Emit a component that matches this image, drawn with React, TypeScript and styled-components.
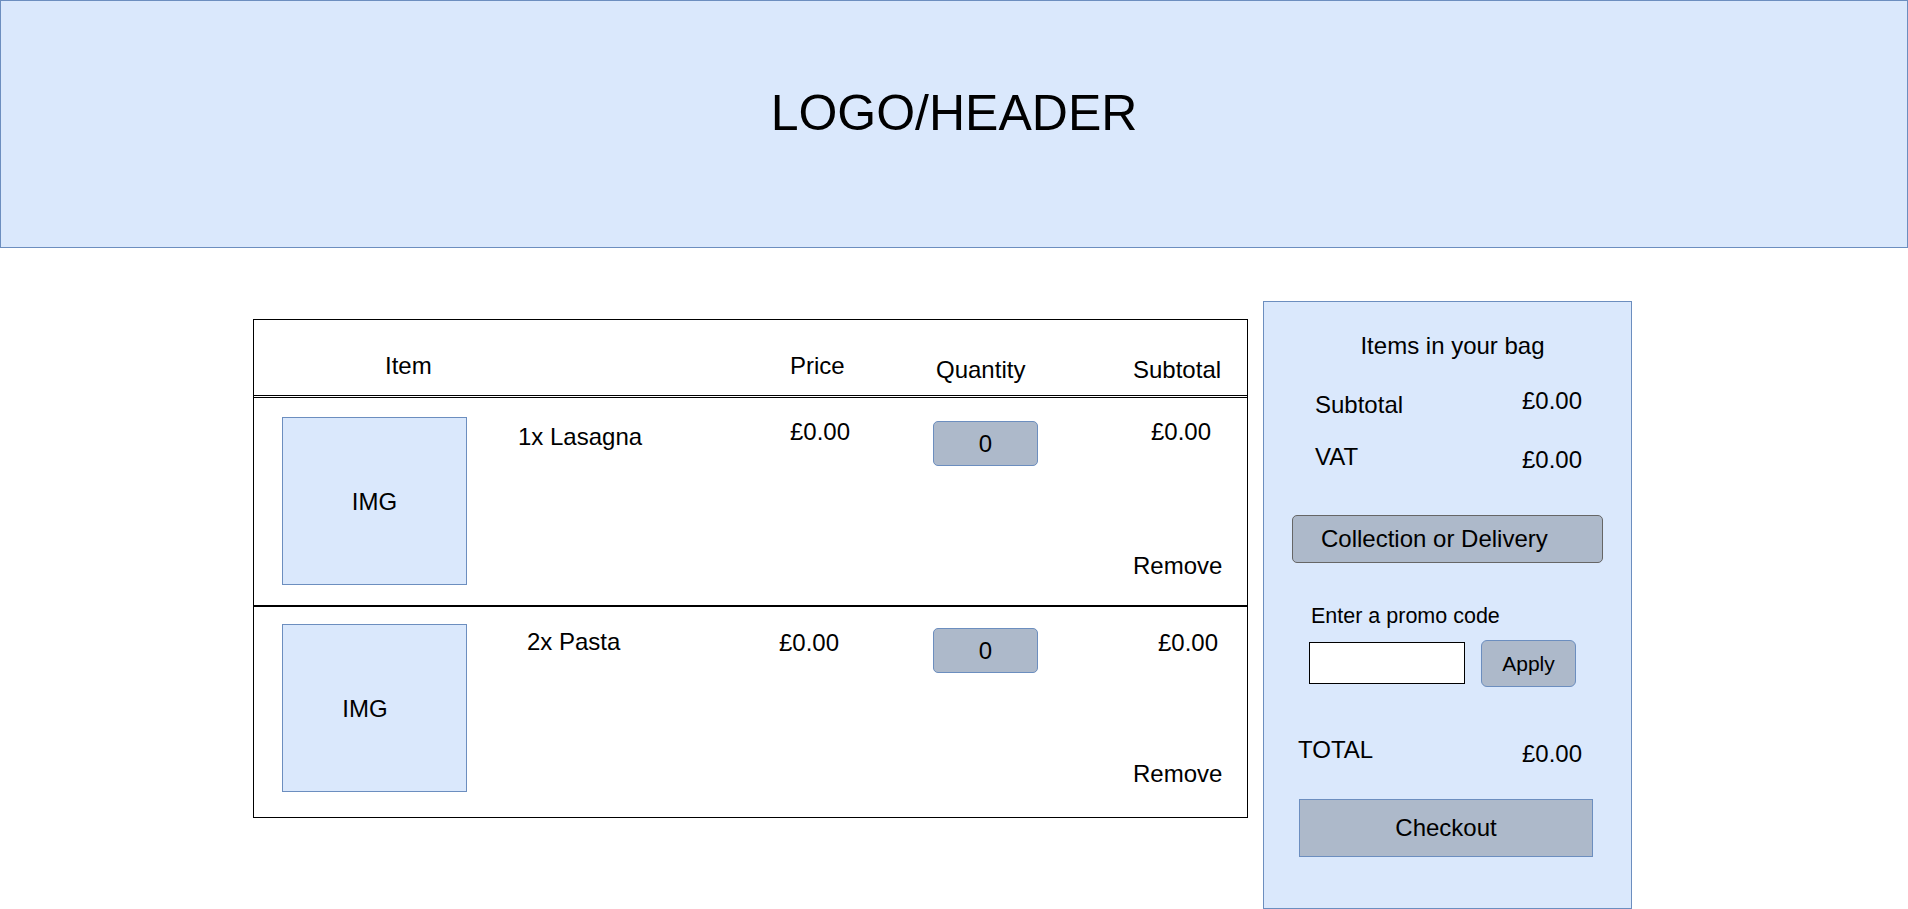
import React from "react";
import styled, { createGlobalStyle } from "styled-components";

const GlobalStyle = createGlobalStyle`
  html, body {
    margin: 0;
    padding: 0;
    background: #ffffff;
  }
  body {
    font-family: "Liberation Sans", Arial, Helvetica, sans-serif;
    color: #000000;
  }
  * {
    box-sizing: border-box;
  }
`;

const Page = styled.div`
  width: 1908px;
  min-height: 909px;
`;

const Header = styled.header`
  height: 248px;
  border: 1px solid #6c8ebf;
  background: #dae8fc;
  padding-top: 83px;
  text-align: center;
  font-size: 50px;
  line-height: 58px;
`;

const Main = styled.main`
  display: flex;
  align-items: flex-start;
  padding-left: 253px;
  gap: 15px;
`;

const Table = styled.section`
  width: 995px;
  margin-top: 71px;
  border: 1px solid #000000;
  background: #ffffff;
`;

const grid = `
  display: grid;
  grid-template-columns: 264px 261px 154px 105px 95px 1fr;
  align-items: start;
`;

const HeaderRow = styled.div`
  ${grid}
  height: 78px;
  border-bottom: 3px double #000000;
`;

const ItemRow = styled.div<{ $h: number; $divider?: boolean }>`
  ${grid}
  height: ${(p) => p.$h + (p.$divider ? 2 : 0)}px;
  border-bottom: ${(p) => (p.$divider ? "2px solid #000000" : "none")};
`;

const Cell = styled.div<{ $x?: number; $y?: number }>`
  margin-left: ${(p) => p.$x ?? 0}px;
  margin-top: ${(p) => p.$y ?? 0}px;
  font-size: 24px;
  line-height: 28px;
  white-space: nowrap;
`;

const ImgBox = styled.div<{ $y: number; $shift?: number }>`
  margin-left: 28px;
  margin-top: ${(p) => p.$y}px;
  width: 185px;
  height: 168px;
  border: 1px solid #6c8ebf;
  background: #dae8fc;
  display: flex;
  align-items: center;
  justify-content: center;
  padding-top: 2px;
  padding-right: ${(p) => p.$shift ?? 0}px;
  font-size: 24px;
  line-height: 28px;
`;

const QtyBox = styled.div<{ $y: number }>`
  margin-top: ${(p) => p.$y}px;
  width: 105px;
  height: 45px;
  border: 1px solid #6c8ebf;
  border-radius: 5px;
  background: #adb9ca;
  display: flex;
  align-items: center;
  justify-content: center;
  font-size: 24px;
  line-height: 28px;
`;

const SubtotalCol = styled.div<{ $y: number; $gap: number; $x: number }>`
  margin-top: ${(p) => p.$y}px;
  display: flex;
  flex-direction: column;
  align-items: flex-start;
  font-size: 24px;
  line-height: 28px;
  & > span:first-child {
    margin-left: ${(p) => p.$x}px;
  }
  & > span:last-child {
    margin-top: ${(p) => p.$gap}px;
  }
`;

const Summary = styled.aside`
  width: 369px;
  height: 608px;
  margin-top: 53px;
  border: 1px solid #6c8ebf;
  background: #dae8fc;
  display: flex;
  flex-direction: column;
  align-items: flex-start;
`;

const SummaryTitle = styled.div`
  align-self: stretch;
  margin-top: 30px;
  padding-left: 10px;
  text-align: center;
  font-size: 24px;
  line-height: 28px;
`;

const SummaryLine = styled.div<{ $y: number; $pad: number; $labelW: number }>`
  display: flex;
  align-items: flex-start;
  margin-top: ${(p) => p.$y}px;
  padding-left: ${(p) => p.$pad}px;
  font-size: 24px;
  line-height: 28px;
  & > span:first-child {
    width: ${(p) => p.$labelW}px;
  }
`;

const Shifted = styled.span<{ $y: number }>`
  margin-top: ${(p) => p.$y}px;
  white-space: nowrap;
`;

const ChoiceButton = styled.button`
  margin-top: 41px;
  margin-left: 28px;
  width: 311px;
  height: 48px;
  border: 1px solid #666666;
  border-radius: 5px;
  background: #adb9ca;
  padding: 0 0 0 28px;
  text-align: left;
  align-self: flex-start;
  display: block;
  font-family: inherit;
  font-size: 24px;
  line-height: 28px;
  color: #000000;
`;

const PromoLabel = styled.div`
  margin-top: 41px;
  margin-left: 47px;
  font-size: 21.5px;
  line-height: 24px;
`;

const PromoRow = styled.div`
  display: flex;
  align-items: flex-start;
  margin-top: 12px;
  margin-left: 45px;
  gap: 16px;
`;

const PromoInput = styled.input`
  margin-top: 2px;
  width: 156px;
  height: 42px;
  border: 1px solid #000000;
  border-radius: 0;
  background: #ffffff;
  padding: 0 6px;
  font-family: inherit;
  font-size: 20px;
  outline: none;
`;

const ApplyButton = styled.button`
  width: 95px;
  height: 47px;
  border: 1px solid #6c8ebf;
  border-radius: 6px;
  background: #adb9ca;
  padding: 0;
  font-family: inherit;
  font-size: 21px;
  line-height: 24px;
  color: #000000;
`;

const CheckoutButton = styled.button`
  margin-top: 31px;
  margin-left: 35px;
  width: 294px;
  height: 58px;
  border: 1px solid #6c8ebf;
  border-radius: 0;
  background: #adb9ca;
  padding: 0;
  font-family: inherit;
  font-size: 24px;
  line-height: 28px;
  color: #000000;
`;

type Row = {
  name: string;
  h: number;
  divider: boolean;
  img: { y: number; shift: number };
  nameAt: { x: number; y: number };
  priceAt: { x: number; y: number };
  qtyY: number;
  sub: { x: number; y: number; gap: number };
};

const rows: Row[] = [
  {
    name: "1x Lasagna",
    h: 207,
    divider: true,
    img: { y: 19, shift: 0 },
    nameAt: { x: 0, y: 25 },
    priceAt: { x: 11, y: 20 },
    qtyY: 23,
    sub: { x: 18, y: 20, gap: 106 },
  },
  {
    name: "2x Pasta",
    h: 210,
    divider: false,
    img: { y: 17, shift: 19 },
    nameAt: { x: 9, y: 21 },
    priceAt: { x: 0, y: 22 },
    qtyY: 21,
    sub: { x: 25, y: 22, gap: 103 },
  },
];

export default function App() {
  return (
    <Page>
      <GlobalStyle />
      <Header>LOGO/HEADER</Header>
      <Main>
        <Table>
          <HeaderRow>
            <Cell $x={131} $y={32}>Item</Cell>
            <div />
            <Cell $x={11} $y={32}>Price</Cell>
            <Cell $x={3} $y={36}>Quantity</Cell>
            <div />
            <Cell $x={0} $y={36}>Subtotal</Cell>
          </HeaderRow>
          {rows.map((r) => (
            <ItemRow key={r.name} $h={r.h} $divider={r.divider}>
              <ImgBox $y={r.img.y} $shift={r.img.shift}>IMG</ImgBox>
              <Cell $x={r.nameAt.x} $y={r.nameAt.y}>{r.name}</Cell>
              <Cell $x={r.priceAt.x} $y={r.priceAt.y}>£0.00</Cell>
              <QtyBox $y={r.qtyY}>0</QtyBox>
              <div />
              <SubtotalCol $y={r.sub.y} $x={r.sub.x} $gap={r.sub.gap}>
                <span>£0.00</span>
                <span>Remove</span>
              </SubtotalCol>
            </ItemRow>
          ))}
        </Table>
        <Summary>
          <SummaryTitle>Items in your bag</SummaryTitle>
          <SummaryLine $y={27} $pad={51} $labelW={207}>
            <Shifted $y={4}>Subtotal</Shifted>
            <Shifted $y={0}>£0.00</Shifted>
          </SummaryLine>
          <SummaryLine $y={24} $pad={51} $labelW={207}>
            <Shifted $y={0}>VAT</Shifted>
            <Shifted $y={3}>£0.00</Shifted>
          </SummaryLine>
          <ChoiceButton type="button">Collection or Delivery</ChoiceButton>
          <PromoLabel>Enter a promo code</PromoLabel>
          <PromoRow>
            <PromoInput type="text" aria-label="Promo code" />
            <ApplyButton type="button">Apply</ApplyButton>
          </PromoRow>
          <SummaryLine $y={49} $pad={34} $labelW={224}>
            <Shifted $y={0}>TOTAL</Shifted>
            <Shifted $y={4}>£0.00</Shifted>
          </SummaryLine>
          <CheckoutButton type="button">Checkout</CheckoutButton>
        </Summary>
      </Main>
    </Page>
  );
}
